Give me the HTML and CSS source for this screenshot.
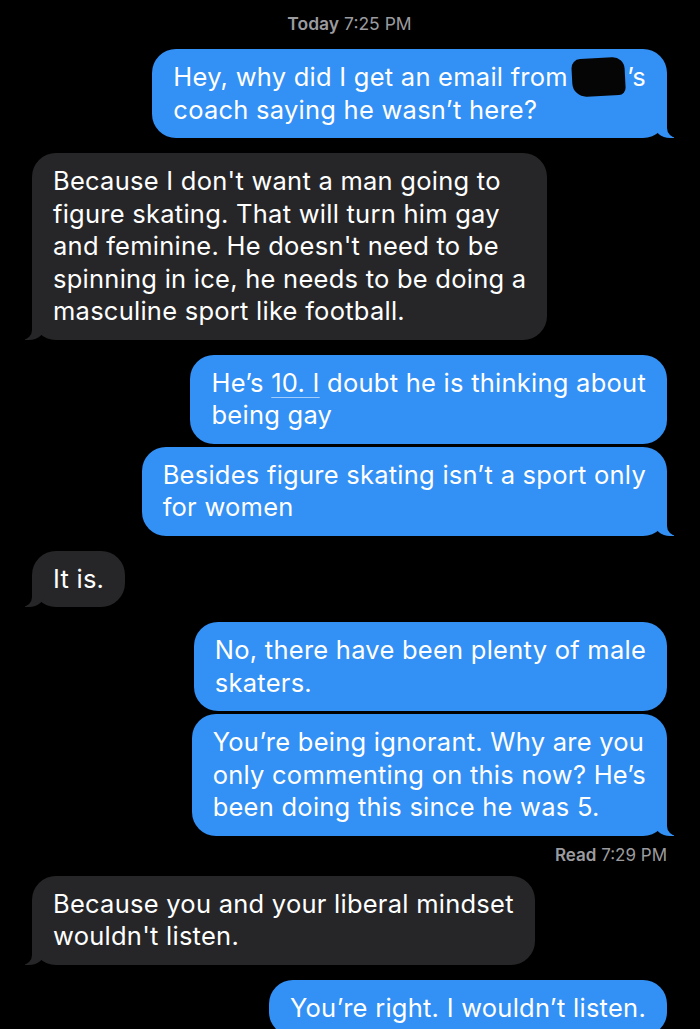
FILE: index.html
```html
<!DOCTYPE html>
<html lang="en">

<head>
    <meta charset="UTF-8">
    <meta name="viewport" content="width=device-width, initial-scale=1.0">
    <title>Messages</title>
    <link rel="stylesheet" href="styles.css">
</head>

<body>
    <main class="thread">
        <p class="stamp"><strong>Today</strong> 7:25 PM</p>

        <div class="msg out tail">Hey, why did I get an email from <span class="redact"></span>’s<br>coach saying he wasn’t here?</div>

        <div class="msg in tail">Because I don't want a man going to<br>figure skating. That will turn him gay<br>and feminine. He doesn't need to be<br>spinning in ice, he needs to be doing a<br>masculine sport like football.</div>

        <div class="msg out">He’s <span class="link">10. I</span> doubt he is thinking about<br>being gay</div>
        <div class="msg out tail close">Besides figure skating isn’t a sport only<br>for women</div>

        <div class="msg in tail">It is.</div>

        <div class="msg out">No, there have been plenty of male<br>skaters.</div>
        <div class="msg out tail close">You’re being ignorant. Why are you<br>only commenting on this now? He’s<br>been doing this since he was 5.</div>
        <p class="receipt"><strong>Read</strong> 7:29 PM</p>

        <div class="msg in tail">Because you and your liberal mindset<br>wouldn't listen.</div>

        <div class="msg out">You’re right. I wouldn’t listen.</div>
    </main>
</body>

</html>
```

FILE: styles.css
```css
body {
    margin: 0;
    background-color: #000;
    font-family: Inter, "Noto Sans", sans-serif;
    color: #fff;
}

.thread {
    display: flex;
    flex-direction: column;
    padding: 0 33px 0 32px;
    height: 1029px;
    box-sizing: border-box;
    overflow: hidden;
}

.stamp {
    margin: 14px 0 0;
    line-height: 20px;
    text-align: center;
    font-size: 17.5px;
    color: #9b9b9f;
}

.stamp strong,
.receipt strong {
    font-weight: 600;
}

.msg {
    position: relative;
    flex-shrink: 0;
    padding: 12px 21px;
    font-size: 25.5px;
    letter-spacing: 0.25px;
    line-height: 32.5px;
    border-radius: 24px;
    margin-top: 15px;
    white-space: nowrap;
}

.msg.close {
    margin-top: 3px;
}

.out {
    align-self: flex-end;
    background-color: #3390f5;
}

.in {
    align-self: flex-start;
    background-color: #262628;
}

/* bubble tails */
.tail::before,
.tail::after {
    content: "";
    position: absolute;
    bottom: 0;
    height: 24px;
}

.out.tail::before {
    right: -7px;
    width: 20px;
    background-color: #3390f5;
    border-bottom-left-radius: 16px 14px;
}

.out.tail::after {
    right: -26px;
    width: 26px;
    background-color: #000;
    border-bottom-left-radius: 10px;
}

.in.tail::before {
    left: -7px;
    width: 20px;
    background-color: #262628;
    border-bottom-right-radius: 16px 14px;
}

.in.tail::after {
    left: -26px;
    width: 26px;
    background-color: #000;
    border-bottom-right-radius: 10px;
}

.redact {
    display: inline-block;
    width: 53px;
    height: 38px;
    margin: -14px 2px -10px -3px;
    vertical-align: 0;
    background-color: #050505;
    border-radius: 9px 12px 7px 14px;
    transform: rotate(-3deg);
}

.link {
    text-decoration: underline;
    text-decoration-color: rgba(255, 255, 255, 0.55);
    text-decoration-thickness: 1px;
    text-underline-offset: 5px;
}

.receipt {
    align-self: flex-end;
    margin: 9px 0 0;
    line-height: 20px;
    font-size: 17px;
    color: #9b9b9f;
}

.receipt + .msg {
    margin-top: 11px;
}
```
